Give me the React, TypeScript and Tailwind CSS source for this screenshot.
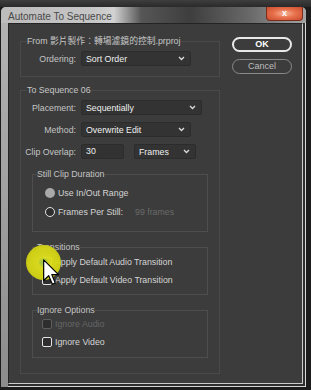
import React from 'react'

const Chevron = () => (
    <svg width="7" height="5" viewBox="0 0 7 5" className="shrink-0">
        <path d="M1 1l2.5 2.5L6 1" fill="none" stroke="#dcdcdc" strokeWidth="1.3" />
    </svg>
)

const Select = ({ value, w }: { value: string; w: string }) => (
    <div className={`flex items-center justify-between h-[15px] pl-[4px] pr-[5px] bg-[#333333] border border-[#2c2c2c] rounded-[2px] text-[#f0f0f0] ${w}`}>
        <span>{value}</span>
        <Chevron />
    </div>
)

const Row = ({ label, children }: { label: string; children: React.ReactNode }) => (
    <div className="flex items-center h-[15px]">
        <span className="w-[54px] shrink-0 flex justify-end whitespace-nowrap text-[#c4c4c4] pr-[5px]">{label}</span>
        {children}
    </div>
)

const Check = ({ label, disabled }: { label: string; disabled?: boolean }) => (
    <div className="flex items-center h-[14px] ml-[5px] gap-[3px]">
        <div className={`w-[10px] h-[10px] rounded-[2px] border-[1.5px] bg-[#2e2e2e] ${disabled ? 'border-[#5e5e5e]' : 'border-[#e4e4e4]'}`}></div>
        <span className={disabled ? 'text-[#666666]' : 'text-[#d4d4d4]'}>{label}</span>
    </div>
)

const App = () => {
    return (
        <div className="w-[311px] h-[390px] overflow-hidden relative bg-[#1c1c1c] text-[8.8px] leading-[12px] font-['Liberation_Sans','Noto_Sans_CJK_TC',sans-serif]">
            <div className="h-[7px] bg-gradient-to-b from-[#3e3e3e] to-[#2a2a2a]"></div>

            {/* Window */}
            <div className="ml-[1px] w-[305px] h-[380px] flex flex-col rounded-t-[5px] bg-gradient-to-b from-[#b4b4b4] to-[#8c8c8c]">
                {/* Title bar */}
                <div className="h-[16px] flex items-start rounded-t-[5px] bg-[linear-gradient(90deg,#bcbcbc_0%,#c6c6c6_30%,#d2d2d2_37%,#565656_46%,#3e3e3e_62%,#6a6a6a_82%,#a4a4a4_100%)]">
                    <span className="pl-[7px] pt-[4px] text-[10px] leading-[12px] text-[#4a4a4a]">Automate To Sequence</span>
                    <div className="ml-auto mr-[3px] w-[37px] h-[14px] flex items-center justify-center rounded-b-[4px] border border-t-0 border-[#7a2c1c] bg-[radial-gradient(ellipse_at_center,#f7b59c_0%,#e8714c_45%,#c94a2e_100%)] text-white text-[9px] font-bold leading-none">
                        x
                    </div>
                </div>

                {/* Frame + panel */}
                <div className="flex-1 ml-[7px] bg-[#2e2e2e] border-r border-b border-[#d6d6d6] pr-[2px] pb-[2px]">
                    <div className="h-full bg-[#3c3c3c] border-t border-l border-[#242424] border-r border-b border-r-[#cccccc] border-b-[#cccccc] flex pl-[11px] pt-[11px] gap-[12px]">
                        {/* Left column */}
                        <div className="w-[200px] flex flex-col">
                            <fieldset className="border border-[#4a4a4a] px-[6px] pt-[4px] pb-[10px]">
                                <legend className="text-[#c6c6c6] leading-[12px]">From 影片製作：轉場濾鏡的控制.prproj</legend>
                                <Row label="Ordering:">
                                    <Select value="Sort Order" w="w-[110px]" />
                                </Row>
                            </fieldset>

                            <fieldset className="mt-[7px] border border-[#4a4a4a] px-[6px] pt-[4px] pb-[15px]">
                                <legend className="text-[#c6c6c6] leading-[12px]">To Sequence 06</legend>
                                <div className="flex flex-col gap-[7px]">
                                    <Row label="Placement:">
                                        <Select value="Sequentially" w="w-[121px]" />
                                    </Row>
                                    <Row label="Method:">
                                        <Select value="Overwrite Edit" w="w-[110px]" />
                                    </Row>
                                    <Row label="Clip Overlap:">
                                        <div className="w-[43px] h-[15px] pl-[4px] bg-[#323232] border border-[#2c2c2c] rounded-[2px] text-[#f0f0f0] leading-[13px]">30</div>
                                        <div className="ml-[10px]">
                                            <Select value="Frames" w="w-[62px]" />
                                        </div>
                                    </Row>
                                </div>

                                <fieldset className="mt-[9px] ml-[5px] w-[176px] border border-[#4e4e4e] px-[4px] pt-[6px] pb-[12px]">
                                    <legend className="text-[#c4c4c4] leading-[12px]">Still Clip Duration</legend>
                                    <div className="flex flex-col gap-[5px]">
                                        <div className="flex items-center h-[14px] ml-[8px] gap-[3px]">
                                            <div className="w-[10px] h-[10px] rounded-full bg-[#a9a9a9]"></div>
                                            <span className="text-[#d4d4d4]">Use In/Out Range</span>
                                        </div>
                                        <div className="flex items-center h-[14px] ml-[8px] gap-[3px]">
                                            <div className="w-[10px] h-[10px] rounded-full border-[1.5px] border-[#e2e2e2] bg-[#2e2e2e]"></div>
                                            <span className="text-[#d4d4d4]">Frames Per Still:</span>
                                            <span className="ml-[9px] text-[#6a6a6a]">99 frames</span>
                                        </div>
                                    </div>
                                </fieldset>

                                <fieldset className="mt-[9px] ml-[5px] w-[176px] border border-[#4e4e4e] px-[4px] pt-[2px] pb-[7px]">
                                    <legend className="text-[#c4c4c4] leading-[12px]">Transitions</legend>
                                    <div className="flex flex-col gap-[4px]">
                                        <Check label="Apply Default Audio Transition" />
                                        <Check label="Apply Default Video Transition" />
                                    </div>
                                </fieldset>

                                <fieldset className="mt-[9px] ml-[5px] w-[176px] border border-[#4e4e4e] px-[4px] pt-[1px] pb-[8px]">
                                    <legend className="text-[#c4c4c4] leading-[12px]">Ignore Options</legend>
                                    <div className="flex flex-col gap-[4px]">
                                        <Check label="Ignore Audio" disabled />
                                        <Check label="Ignore Video" />
                                    </div>
                                </fieldset>
                            </fieldset>
                        </div>

                        {/* Buttons */}
                        <div className="w-[60px] flex flex-col gap-[7px] pt-[2px]">
                            <button className="h-[15px] rounded-full border-2 border-[#e8e8e8] text-white font-bold text-[9px] leading-none">OK</button>
                            <button className="h-[15px] rounded-full border border-[#8a8a8a] text-[#bcbcbc] text-[9px] leading-none">Cancel</button>
                        </div>
                    </div>
                </div>
            </div>

            {/* Click highlight + cursor */}
            <div className="absolute left-[26px] top-[245px] w-[35px] h-[35px] rounded-full bg-[radial-gradient(circle,#9cc24e_0%,#a8c840_9%,#e0e01c_22%,#d6d614_60%,#b6b61a_100%)] opacity-95"></div>
            <svg className="absolute left-[43px] top-[259px]" width="16" height="27" viewBox="0 0 12 20">
                <path d="M0.5 0.5V16L4.3 12.4L7 18.8L9.2 17.9L6.6 11.6H11.6Z" fill="#ffffff" stroke="#000000" strokeWidth="0.9" strokeLinejoin="round" />
            </svg>
        </div>
    )
}

export default App
